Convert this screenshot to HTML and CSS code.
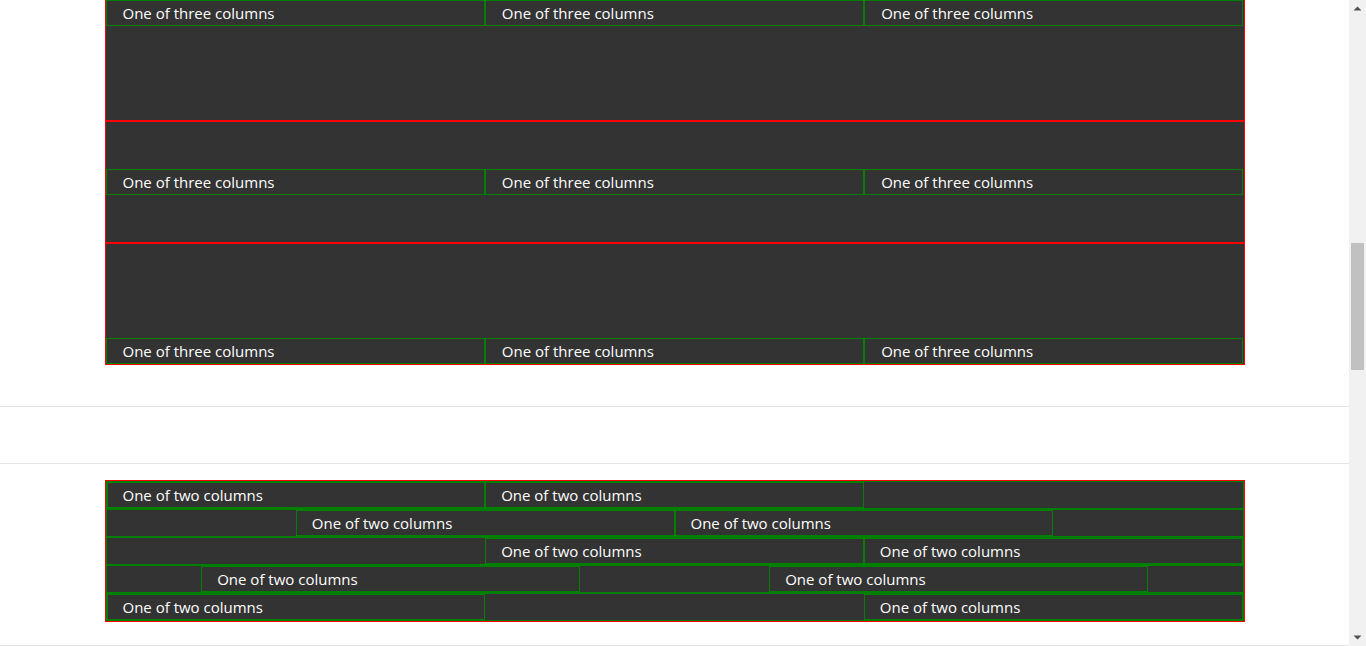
FILE: index.html
```html
<!DOCTYPE html>
<html lang="en">
<head>
<meta charset="utf-8">
<title>Grid alignment</title>
<link rel="stylesheet" href="styles.css">
</head>
<body>
<div class="page">
  <main class="viewport">
    <section class="container align-demo">
      <div class="row row-start">
        <div class="col">One of three columns</div>
        <div class="col">One of three columns</div>
        <div class="col">One of three columns</div>
      </div>
      <div class="row row-center">
        <div class="col">One of three columns</div>
        <div class="col">One of three columns</div>
        <div class="col">One of three columns</div>
      </div>
      <div class="row row-end">
        <div class="col">One of three columns</div>
        <div class="col">One of three columns</div>
        <div class="col">One of three columns</div>
      </div>
    </section>

    <div class="rule rule-first"></div>
    <div class="rule rule-second"></div>

    <section class="container justify-demo">
      <div class="jrow j-start">
        <div class="col">One of two columns</div>
        <div class="col">One of two columns</div>
      </div>
      <div class="jrow j-center">
        <div class="col">One of two columns</div>
        <div class="col">One of two columns</div>
      </div>
      <div class="jrow j-end">
        <div class="col">One of two columns</div>
        <div class="col">One of two columns</div>
      </div>
      <div class="jrow j-around">
        <div class="col">One of two columns</div>
        <div class="col">One of two columns</div>
      </div>
      <div class="jrow j-between">
        <div class="col">One of two columns</div>
        <div class="col">One of two columns</div>
      </div>
    </section>

    <div class="rule rule-third"></div>
  </main>

  <div class="scrollbar" aria-hidden="true">
    <div class="sb-button">
      <svg width="17" height="17" viewBox="0 0 17 17"><path d="M4.5 10.5 L8.5 6.5 L12.5 10.5 Z" fill="#505050"/></svg>
    </div>
    <div class="sb-track">
      <div class="sb-thumb"></div>
    </div>
    <div class="sb-button">
      <svg width="17" height="17" viewBox="0 0 17 17"><path d="M4.5 6.5 L8.5 10.5 L12.5 6.5 Z" fill="#505050"/></svg>
    </div>
  </div>
</div>
</body>
</html>
```

FILE: styles.css
```css
html, body {
  margin: 0;
  padding: 0;
  background: #ffffff;
  overflow: hidden;
}

body {
  font-family: "Open Sans", "Noto Sans", "DejaVu Sans", sans-serif;
  font-size: 15px;
  color: #ffffff;
}

.page {
  display: flex;
  width: 1366px;
  height: 646px;
  overflow: hidden;
}

.viewport {
  flex: 1 1 auto;
  min-width: 0;
  overflow: hidden;
}

.container {
  width: 1140px;
  margin-left: auto;
  margin-right: auto;
  box-sizing: border-box;
}

/* Section 1: vertical alignment */
.align-demo {
  margin-top: -1px;
}

.row {
  display: flex;
  min-height: 120px;
  border: 1px solid #ff0000;
  background: #333333;
}

.row-start { align-items: flex-start; }
.row-center { align-items: center; }
.row-end { align-items: flex-end; }

.col {
  flex: 0 0 33.3333%;
  box-sizing: border-box;
  height: 26px;
  border: 1px solid #008000;
  padding: 0 15px 0 16px;
  line-height: 24px;
  white-space: nowrap;
  overflow: hidden;
  background: #333333;
}

.jrow .col {
  padding-left: 15px;
}

/* separators */
.rule {
  height: 0;
  border-top: 1px solid #e5e5e5;
}

.rule-first { margin-top: 41px; }
.rule-second { margin-top: 56px; }
.rule-third { margin-top: 23px; }

/* Section 2: horizontal alignment */
.justify-demo {
  margin-top: 16px;
  border: 1px solid #ff0000;
  background: #333333;
}

.jrow {
  display: flex;
  border: 1px solid #008000;
}

.j-start { justify-content: flex-start; }
.j-center { justify-content: center; }
.j-end { justify-content: flex-end; }
.j-around { justify-content: space-around; }
.j-between { justify-content: space-between; }

/* fake classic scrollbar */
.scrollbar {
  flex: 0 0 17px;
  width: 17px;
  background: #f1f1f1;
  display: flex;
  flex-direction: column;
}

.sb-button {
  flex: 0 0 17px;
  height: 17px;
}

.sb-button svg {
  display: block;
}

.sb-track {
  flex: 1 1 auto;
  display: flex;
  flex-direction: column;
  padding-top: 226px;
}

.sb-thumb {
  height: 127px;
  margin: 0 2px;
  background: #c1c1c1;
}
```
